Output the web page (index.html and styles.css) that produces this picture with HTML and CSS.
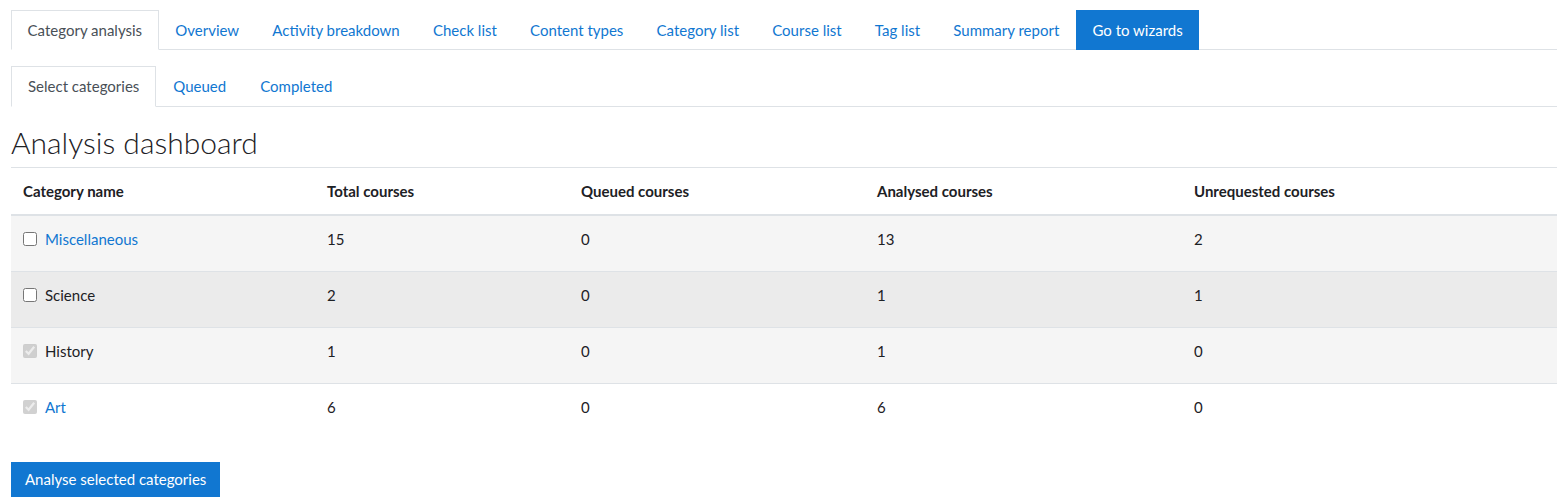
FILE: index.html
```html
<!DOCTYPE html>
<html lang="en">

<head>
    <meta charset="UTF-8">
    <meta name="viewport" content="width=device-width, initial-scale=1.0">
    <link rel="stylesheet" href="styles.css">
</head>

<body>
    <div class="page">
        <ul class="tabs">
            <li><a class="tab active">Category analysis</a></li>
            <li><a class="tab" href="#">Overview</a></li>
            <li><a class="tab" href="#">Activity breakdown</a></li>
            <li><a class="tab" href="#">Check list</a></li>
            <li><a class="tab" href="#">Content types</a></li>
            <li><a class="tab" href="#">Category list</a></li>
            <li><a class="tab" href="#">Course list</a></li>
            <li><a class="tab" href="#">Tag list</a></li>
            <li><a class="tab" href="#">Summary report</a></li>
            <li><a class="tab wizard" href="#">Go to wizards</a></li>
        </ul>

        <ul class="tabs subtabs">
            <li><a class="tab active">Select categories</a></li>
            <li><a class="tab" href="#">Queued</a></li>
            <li><a class="tab" href="#">Completed</a></li>
        </ul>

        <h2 class="title">Analysis dashboard</h2>

        <form id="analyseForm">
            <table class="dash">
                <thead>
                    <tr>
                        <th class="c1">Category name</th>
                        <th class="c2">Total courses</th>
                        <th class="c3">Queued courses</th>
                        <th class="c4">Analysed courses</th>
                        <th>Unrequested courses</th>
                    </tr>
                </thead>
                <tbody>
                    <tr class="stripe">
                        <td><label class="cat"><input type="checkbox" name="cat1"><a href="#">Miscellaneous</a></label></td>
                        <td>15</td>
                        <td>0</td>
                        <td>13</td>
                        <td>2</td>
                    </tr>
                    <tr class="hover">
                        <td><label class="cat"><input type="checkbox" name="cat2">Science</label></td>
                        <td>2</td>
                        <td>0</td>
                        <td>1</td>
                        <td>1</td>
                    </tr>
                    <tr class="stripe">
                        <td><label class="cat"><input type="checkbox" name="cat3" checked disabled>History</label></td>
                        <td>1</td>
                        <td>0</td>
                        <td>1</td>
                        <td>0</td>
                    </tr>
                    <tr>
                        <td><label class="cat"><input type="checkbox" name="cat4" checked disabled><a href="#">Art</a></label></td>
                        <td>6</td>
                        <td>0</td>
                        <td>6</td>
                        <td>0</td>
                    </tr>
                </tbody>
            </table>

            <button class="btn" type="button">Analyse selected categories</button>
        </form>
    </div>
</body>

</html>
```

FILE: styles.css
```css
body {
    margin: 0;
    font-family: Lato, "Liberation Sans", sans-serif;
    font-size: 15px;
    line-height: 1.5;
    color: #1d2125;
    background: #fff;
}

a {
    color: #1177d1;
    text-decoration: none;
}

.page {
    padding: 10px 10px 0 11px;
}

.tabs {
    display: flex;
    list-style: none;
    margin: 0;
    padding: 0;
    border-bottom: 1px solid #dee2e6;
}

.tabs li {
    margin-bottom: -1px;
}

.tab {
    display: block;
    padding: 8px 15.6px 7px;
    border: 1px solid transparent;
}

.tab.active {
    color: #495057;
    border-color: #dee2e6 #dee2e6 #fff;
    background: #fff;
}

.tab.wizard {
    background: #1177d1;
    border-color: #1177d1;
    color: #fff;
}

.subtabs {
    margin-top: 16px;
}

.subtabs .tab {
    padding: 8px 16px 9px;
}

.title {
    font-size: 30px;
    font-weight: 300;
    line-height: 1.2;
    margin: 17px 0 7px;
}

.dash {
    width: 100%;
    border-collapse: collapse;
}

.dash th {
    text-align: left;
    font-weight: 700;
    padding: 12px 12px 11px;
    border-top: 1px solid #dee2e6;
    border-bottom: 2px solid #dee2e6;
}

.dash td {
    padding: 12px 12px 20.5px;
    border-top: 1px solid #dee2e6;
}

.dash tbody tr:first-child td {
    border-top: 0;
}

.c1 { width: 280px; }
.c2 { width: 230px; }
.c3 { width: 272px; }
.c4 { width: 293px; }

.stripe {
    background: #f5f5f5;
}

.hover {
    background: #ebebeb;
}

.cat {
    display: flex;
    align-items: center;
}

.cat input {
    margin: 0 8px 0 0;
    width: 14px;
    height: 14px;
}

.btn {
    margin-top: 23px;
    font: inherit;
    color: #fff;
    background: #1177d1;
    border: 1px solid #1177d1;
    padding: 5px 13px 6px;
    cursor: pointer;
}
```
